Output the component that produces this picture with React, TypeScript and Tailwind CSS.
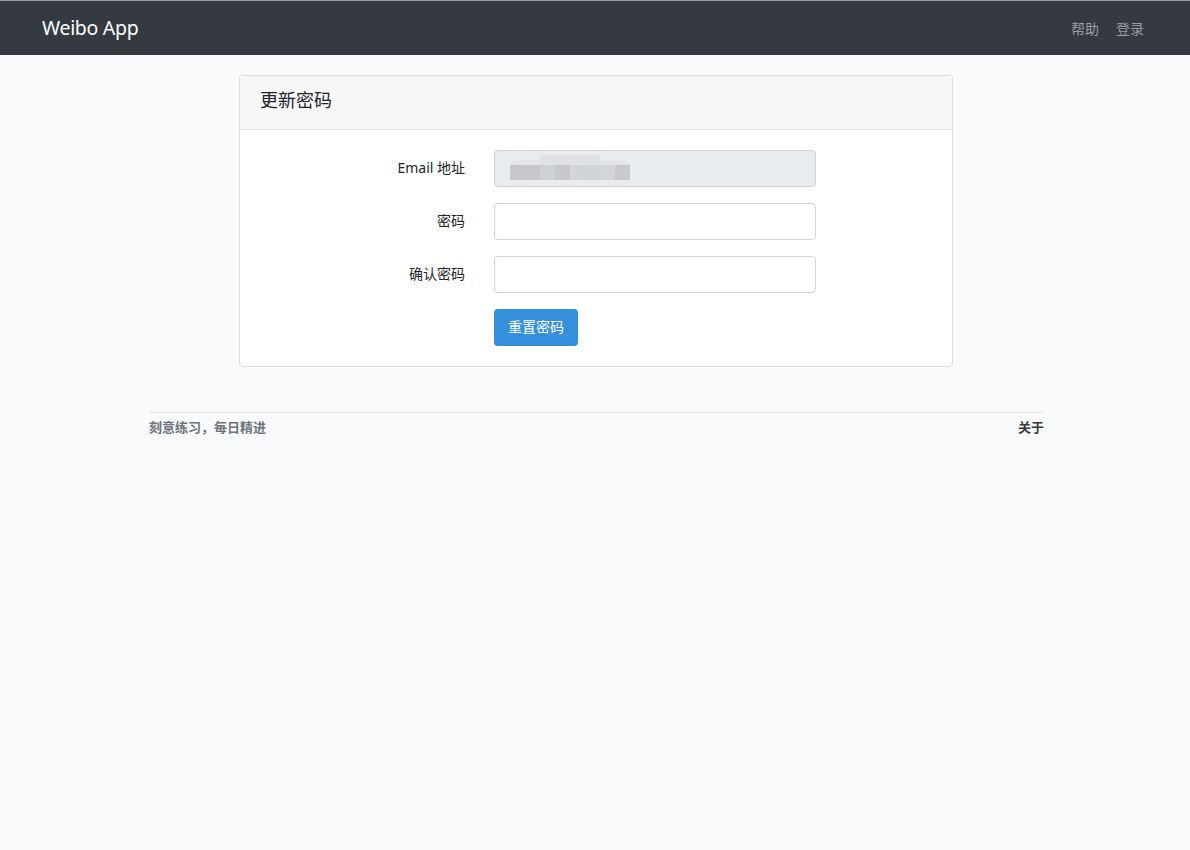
import React from "react";

export default function App() {
  const font = { fontFamily: '"Noto Sans", "Noto Sans CJK SC", sans-serif' };
  return (
    <div className="min-h-[850px] bg-[#f8fafc] text-[#212529]" style={font}>
      <nav className="h-[55px] bg-[#343a40] border-t border-[#9a9a9a] flex items-center justify-between pl-[42px] pr-[46px]">
        <span className="text-white text-[19.5px] leading-none tracking-[-0.3px]">Weibo App</span>
        <div className="flex gap-[17px] text-[14px] text-[#9a9da0]">
          <span>帮助</span>
          <span>登录</span>
        </div>
      </nav>

      <div className="w-[714px] ml-[239px] mt-[20px] bg-white border border-[#dcdcdc] rounded-[4px]">
        <div className="h-[54px] bg-[#f7f7f7] border-b border-[#dcdcdc] flex items-center pl-[20px] pb-[4px] text-[18px] text-[#212529]">
          更新密码
        </div>
        <div className="pt-[20px] pb-[20px] flex flex-col gap-[16px]">
          <div className="flex items-center">
            <label className="w-[225px] text-right text-[14px] pb-[2px]">Email 地址</label>
            <div className="ml-[29px] w-[322px] h-[37px] bg-[#e9ecef] border border-[#ced4da] rounded-[4px] relative">
              <div className="absolute left-[15px] top-[9px] w-[120px] h-[17px] rounded-full bg-[#e3e5e8]" />
              <div className="absolute left-[45px] top-[4px] w-[60px] h-[12px] bg-[#dfe1e4]" />
              <div className="absolute left-[15px] top-[14px] flex h-[15px]">
                <div className="w-[30px] bg-[#c5c7cb]" />
                <div className="w-[15px] bg-[#cdd0d4]" />
                <div className="w-[15px] bg-[#c6c8cc]" />
                <div className="w-[15px] bg-[#d2d4d8]" />
                <div className="w-[15px] bg-[#cfd2d6]" />
                <div className="w-[15px] bg-[#d3d5d9]" />
                <div className="w-[15px] bg-[#c7c9cd]" />
              </div>
            </div>
          </div>
          <div className="flex items-center">
            <label className="w-[225px] text-right text-[14px] pb-[2px]">密码</label>
            <input type="password" className="ml-[29px] w-[322px] h-[37px] bg-white border border-[#ced4da] rounded-[4px] outline-none" />
          </div>
          <div className="flex items-center">
            <label className="w-[225px] text-right text-[14px] pb-[2px]">确认密码</label>
            <input type="password" className="ml-[29px] w-[322px] h-[37px] bg-white border border-[#ced4da] rounded-[4px] outline-none" />
          </div>
          <div className="flex items-center">
            <div className="w-[225px]" />
            <button className="ml-[29px] w-[84px] h-[37px] bg-[#3490dc] text-white text-[14px] rounded-[4px] pb-[2px]">
              重置密码
            </button>
          </div>
        </div>
      </div>

      <footer className="w-[895px] ml-[149px] mt-[45px] border-t border-[#e3e5e8] pt-[5px] flex justify-between text-[13px] font-bold">
        <span className="text-[#6c757d]">刻意练习，每日精进</span>
        <span className="text-[#343a40]">关于</span>
      </footer>
    </div>
  );
}
